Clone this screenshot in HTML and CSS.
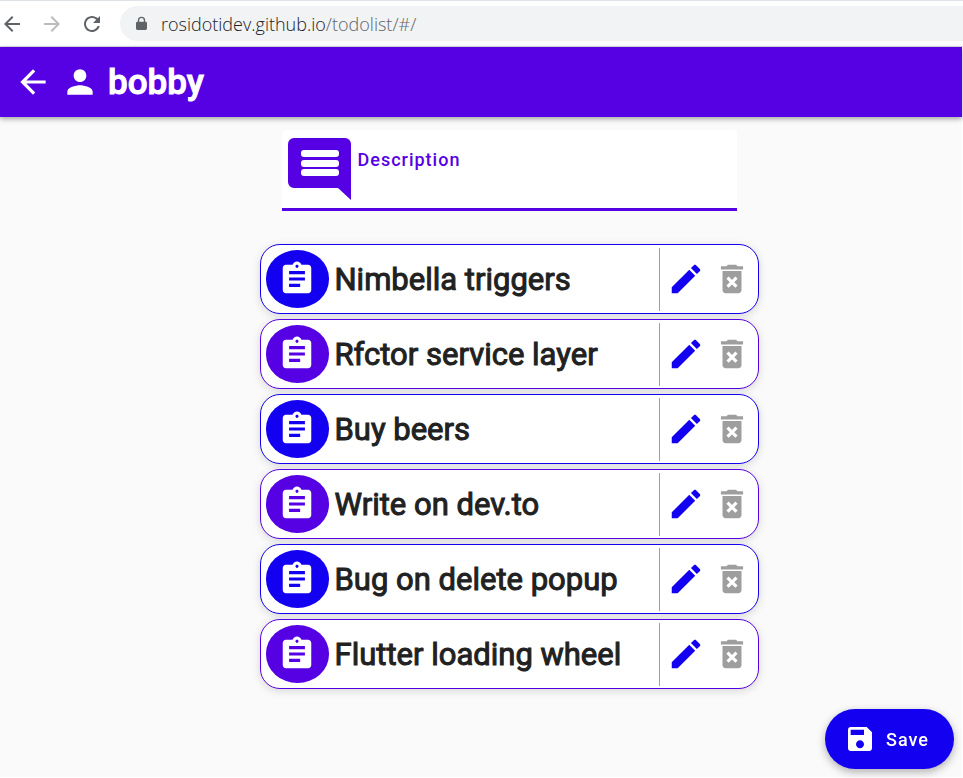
FILE: index.html
```html
<!DOCTYPE html>
<html lang="en">
<head>
<meta charset="utf-8">
<title>todolist</title>
<link rel="stylesheet" href="styles.css">
</head>
<body>
<svg class="defs" aria-hidden="true">
  <symbol id="back" viewBox="0 0 24 24"><path d="M20 11H7.83l5.59-5.59L12 4l-8 8 8 8 1.41-1.41L7.83 13H20v-2z"/></symbol>
  <symbol id="clip" viewBox="0 0 24 24"><path d="M19 3h-4.18C14.4 1.84 13.3 1 12 1c-1.300 0-2.400.84-2.820 2H5c-1.100 0-2 .9-2 2v14c0 1.100.9 2 2 2h14c1.100 0 2-.9 2-2V5c0-1.100-.9-2-2-2zm-7 0c.55 0 1 .45 1 1s-.45 1-1 1-1-.45-1-1 .45-1 1-1zm2 14H7v-2h7v2zm3-4H7v-2h10v2zm0-4H7V7h10v2z"/></symbol>
  <symbol id="pen" viewBox="0 0 24 24"><path d="M3 17.250V21h3.750L17.810 9.940l-3.750-3.750L3 17.250zM20.710 7.040c.39-.39.39-1.020 0-1.410l-2.340-2.340c-.39-.39-1.020-.39-1.410 0l-1.830 1.830 3.750 3.750 1.830-1.830z"/></symbol>
  <symbol id="bin" viewBox="0 0 24 24"><path fill-rule="evenodd" d="M6 19c0 1.100.9 2 2 2h8c1.100 0 2-.9 2-2V7H6v12zm2.460-7.120l1.410-1.410L12 12.590l2.120-2.120 1.410 1.410L13.410 14l2.120 2.120-1.410 1.410L12 15.410l-2.120 2.120-1.410-1.410L10.590 14l-2.130-2.120zM15.500 4l-1-1h-5l-1 1H5v2h14V4z"/></symbol>
</svg>

<header class="browser">
  <button class="nav" aria-label="Back"><svg class="nav-icon"><use href="#back"/></svg></button>
  <button class="nav nav-off" aria-label="Forward"><svg class="nav-icon flip"><use href="#back"/></svg></button>
  <button class="nav" aria-label="Reload"><svg class="nav-icon" viewBox="0 0 24 24"><path d="M17.650 6.350C16.200 4.900 14.210 4 12 4c-4.420 0-7.990 3.580-7.990 8s3.570 8 7.990 8c3.730 0 6.840-2.550 7.730-6h-2.080c-.82 2.330-3.040 4-5.650 4-3.310 0-6-2.690-6-6s2.690-6 6-6c1.660 0 3.140.69 4.220 1.780L13 11h7V4l-2.350 2.350z"/></svg></button>
  <div class="address">
    <svg class="lock" viewBox="0 0 12 16"><path fill-rule="evenodd" d="M2 6V4.500a4 4 0 0 1 8 0V6h.5c.8 0 1.500.7 1.500 1.500v6c0 .8-.7 1.500-1.500 1.500h-9C.7 15 0 14.300 0 13.500v-6C0 6.700.7 6 1.500 6zm1.500 0h5V4.500a2.500 2.500 0 0 0-5 0z"/></svg>
    <span class="url">rosidotidev.github.io<span class="path">/todolist/#/</span></span>
  </div>
</header>

<div class="app">
  <header class="bar">
    <button class="bar-back" aria-label="Back"><svg class="icon"><use href="#back"/></svg></button>
    <svg class="icon" viewBox="0 0 24 24"><path d="M12 12c2.210 0 4-1.790 4-4s-1.790-4-4-4-4 1.790-4 4 1.790 4 4 4zm0 2c-2.670 0-8 1.340-8 4v2h16v-2c0-2.660-5.330-4-8-4z"/></svg>
    <h1 class="user">bobby</h1>
  </header>

  <main class="content">
    <div class="field">
      <svg class="comment" viewBox="0 0 63 62"><path fill="#5600e4" d="M6 0h51a6 6 0 0 1 6 6v56L50 50H6a6 6 0 0 1-6-6V6a6 6 0 0 1 6-6z"/><g fill="#fff"><rect x="13" y="12" width="38" height="7" rx="3"/><rect x="13" y="22" width="38" height="7" rx="3"/><rect x="13" y="31" width="38" height="7" rx="3"/></g></svg>
      <input class="input" type="text" placeholder="Description" aria-label="Description">
    </div>

    <ul class="list">
      <li class="card"><span class="badge"><svg class="icon"><use href="#clip"/></svg></span><span class="name">Nimbella triggers</span><span class="actions"><button class="edit" aria-label="Edit"><svg class="icon"><use href="#pen"/></svg></button><button class="delete" aria-label="Delete"><svg class="icon"><use href="#bin"/></svg></button></span></li>
      <li class="card"><span class="badge"><svg class="icon"><use href="#clip"/></svg></span><span class="name">Rfctor service layer</span><span class="actions"><button class="edit" aria-label="Edit"><svg class="icon"><use href="#pen"/></svg></button><button class="delete" aria-label="Delete"><svg class="icon"><use href="#bin"/></svg></button></span></li>
      <li class="card"><span class="badge"><svg class="icon"><use href="#clip"/></svg></span><span class="name">Buy beers</span><span class="actions"><button class="edit" aria-label="Edit"><svg class="icon"><use href="#pen"/></svg></button><button class="delete" aria-label="Delete"><svg class="icon"><use href="#bin"/></svg></button></span></li>
      <li class="card"><span class="badge"><svg class="icon"><use href="#clip"/></svg></span><span class="name">Write on dev.to</span><span class="actions"><button class="edit" aria-label="Edit"><svg class="icon"><use href="#pen"/></svg></button><button class="delete" aria-label="Delete"><svg class="icon"><use href="#bin"/></svg></button></span></li>
      <li class="card"><span class="badge"><svg class="icon"><use href="#clip"/></svg></span><span class="name">Bug on delete popup</span><span class="actions"><button class="edit" aria-label="Edit"><svg class="icon"><use href="#pen"/></svg></button><button class="delete" aria-label="Delete"><svg class="icon"><use href="#bin"/></svg></button></span></li>
      <li class="card"><span class="badge"><svg class="icon"><use href="#clip"/></svg></span><span class="name">Flutter loading wheel</span><span class="actions"><button class="edit" aria-label="Edit"><svg class="icon"><use href="#pen"/></svg></button><button class="delete" aria-label="Delete"><svg class="icon"><use href="#bin"/></svg></button></span></li>
    </ul>
  </main>

  <button class="save"><svg class="save-icon" viewBox="0 0 24 24"><path d="M17 3H5c-1.110 0-2 .9-2 2v14c0 1.100.89 2 2 2h14c1.100 0 2-.9 2-2V7l-4-4zm-5 16c-1.660 0-3-1.340-3-3s1.340-3 3-3 3 1.340 3 3-1.340 3-3 3zm3-10H5V5h10v4z"/></svg>Save</button>
</div>
</body>
</html>
```
FILE: styles.css
```css
:root {
  --purple: #5600e4;
  --blue: #1400f0;
}

* { box-sizing: border-box; }

body {
  margin: 0;
  min-height: 100vh;
  display: flex;
  flex-direction: column;
  background: #fff;
  font-family: Roboto, "Liberation Sans", sans-serif;
}

button {
  display: flex;
  align-items: center;
  padding: 0;
  border: 0;
  background: none;
  color: inherit;
  font: inherit;
}

svg { display: block; fill: currentColor; flex: none; }
.defs { position: absolute; width: 0; height: 0; }
.icon { width: 38px; height: 38px; }

.browser {
  display: flex;
  align-items: center;
  height: 47px;
  border-top: 1px solid #dee1e6;
  border-bottom: 1px solid #dadce0;
  color: #5f6368;
}
.nav { width: 40px; }
.nav-off { color: #babcbe; }
.nav-icon { width: 24px; height: 24px; }
.flip { transform: scaleX(-1); }
.address {
  flex: 1;
  display: flex;
  align-items: center;
  gap: 14px;
  height: 35px;
  padding-left: 16px;
  border-radius: 18px 0 0 18px;
  background: #f1f3f4;
}
.lock { width: 11px; height: 15px; }
.url {
  color: #202124;
  font-family: "Open Sans", "Noto Sans", sans-serif;
  font-size: 18px;
  font-weight: 300;
}
.path { color: #5f6368; }

.app {
  flex: 1;
  margin: 0 1px 1px 0;
  background: #fafafa;
}

.bar {
  display: flex;
  align-items: center;
  height: 70px;
  padding-left: 14px;
  background: var(--purple);
  color: #fff;
  box-shadow: 0 2px 5px rgba(0, 0, 0, 0.35);
}
.bar-back { margin-right: 9px; }
.user {
  margin: 0 0 0 9px;
  font-size: 35px;
  font-weight: 500;
  -webkit-text-stroke: 1px;
}

.content {
  display: flex;
  flex-direction: column;
  align-items: center;
  padding: 13px 0 0 56px;
}

.field {
  display: flex;
  align-items: flex-start;
  gap: 7px;
  width: 455px;
  max-width: 100%;
  height: 81px;
  padding: 8px 6px 0;
  border-bottom: 3px solid var(--purple);
  border-radius: 4px 4px 0 0;
  background: #fff;
}
.comment { width: 63px; height: 62px; }
.input {
  flex: 1;
  min-width: 0;
  height: 42px;
  padding: 0;
  border: 0;
  outline: 0;
  background: none;
  font: 500 18px Roboto, sans-serif;
  letter-spacing: 1px;
}
.input::placeholder { color: var(--purple); }

.list {
  display: grid;
  gap: 5px;
  width: 499px;
  max-width: 100%;
  margin: 33px 0 0;
  padding: 0;
  list-style: none;
}
.card {
  --accent: var(--blue);
  display: flex;
  align-items: center;
  height: 70px;
  padding: 0 7px 0 5px;
  border: 1px solid var(--accent);
  border-radius: 20px;
  background: #fff;
  box-shadow: 0 2px 8px rgba(0, 0, 0, 0.14);
}
.card:nth-child(even) { --accent: var(--purple); }
.badge {
  display: grid;
  place-items: center;
  width: 63px;
  height: 58px;
  border-radius: 32px / 29px;
  background: var(--accent);
  color: #fff;
}
.name {
  flex: 1;
  margin-left: 6px;
  color: #212121;
  font-size: 31px;
  white-space: nowrap;
  -webkit-text-stroke: 1px;
}
.actions {
  display: flex;
  align-items: center;
  gap: 8px;
  height: 63px;
  padding-left: 7px;
  border-left: 1px solid #a0a0a0;
}
.edit { color: var(--blue); }
.delete { color: #9e9e9e; }

.save {
  position: fixed;
  right: 9px;
  bottom: 9px;
  gap: 10px;
  height: 60px;
  padding: 0 25px 0 19px;
  border-radius: 30px;
  background: var(--blue);
  color: #fff;
  font-size: 18px;
  font-weight: 500;
  letter-spacing: 1px;
  box-shadow: 0 3px 8px rgba(0, 0, 0, 0.3);
}
.save-icon { width: 32px; height: 32px; }
```
